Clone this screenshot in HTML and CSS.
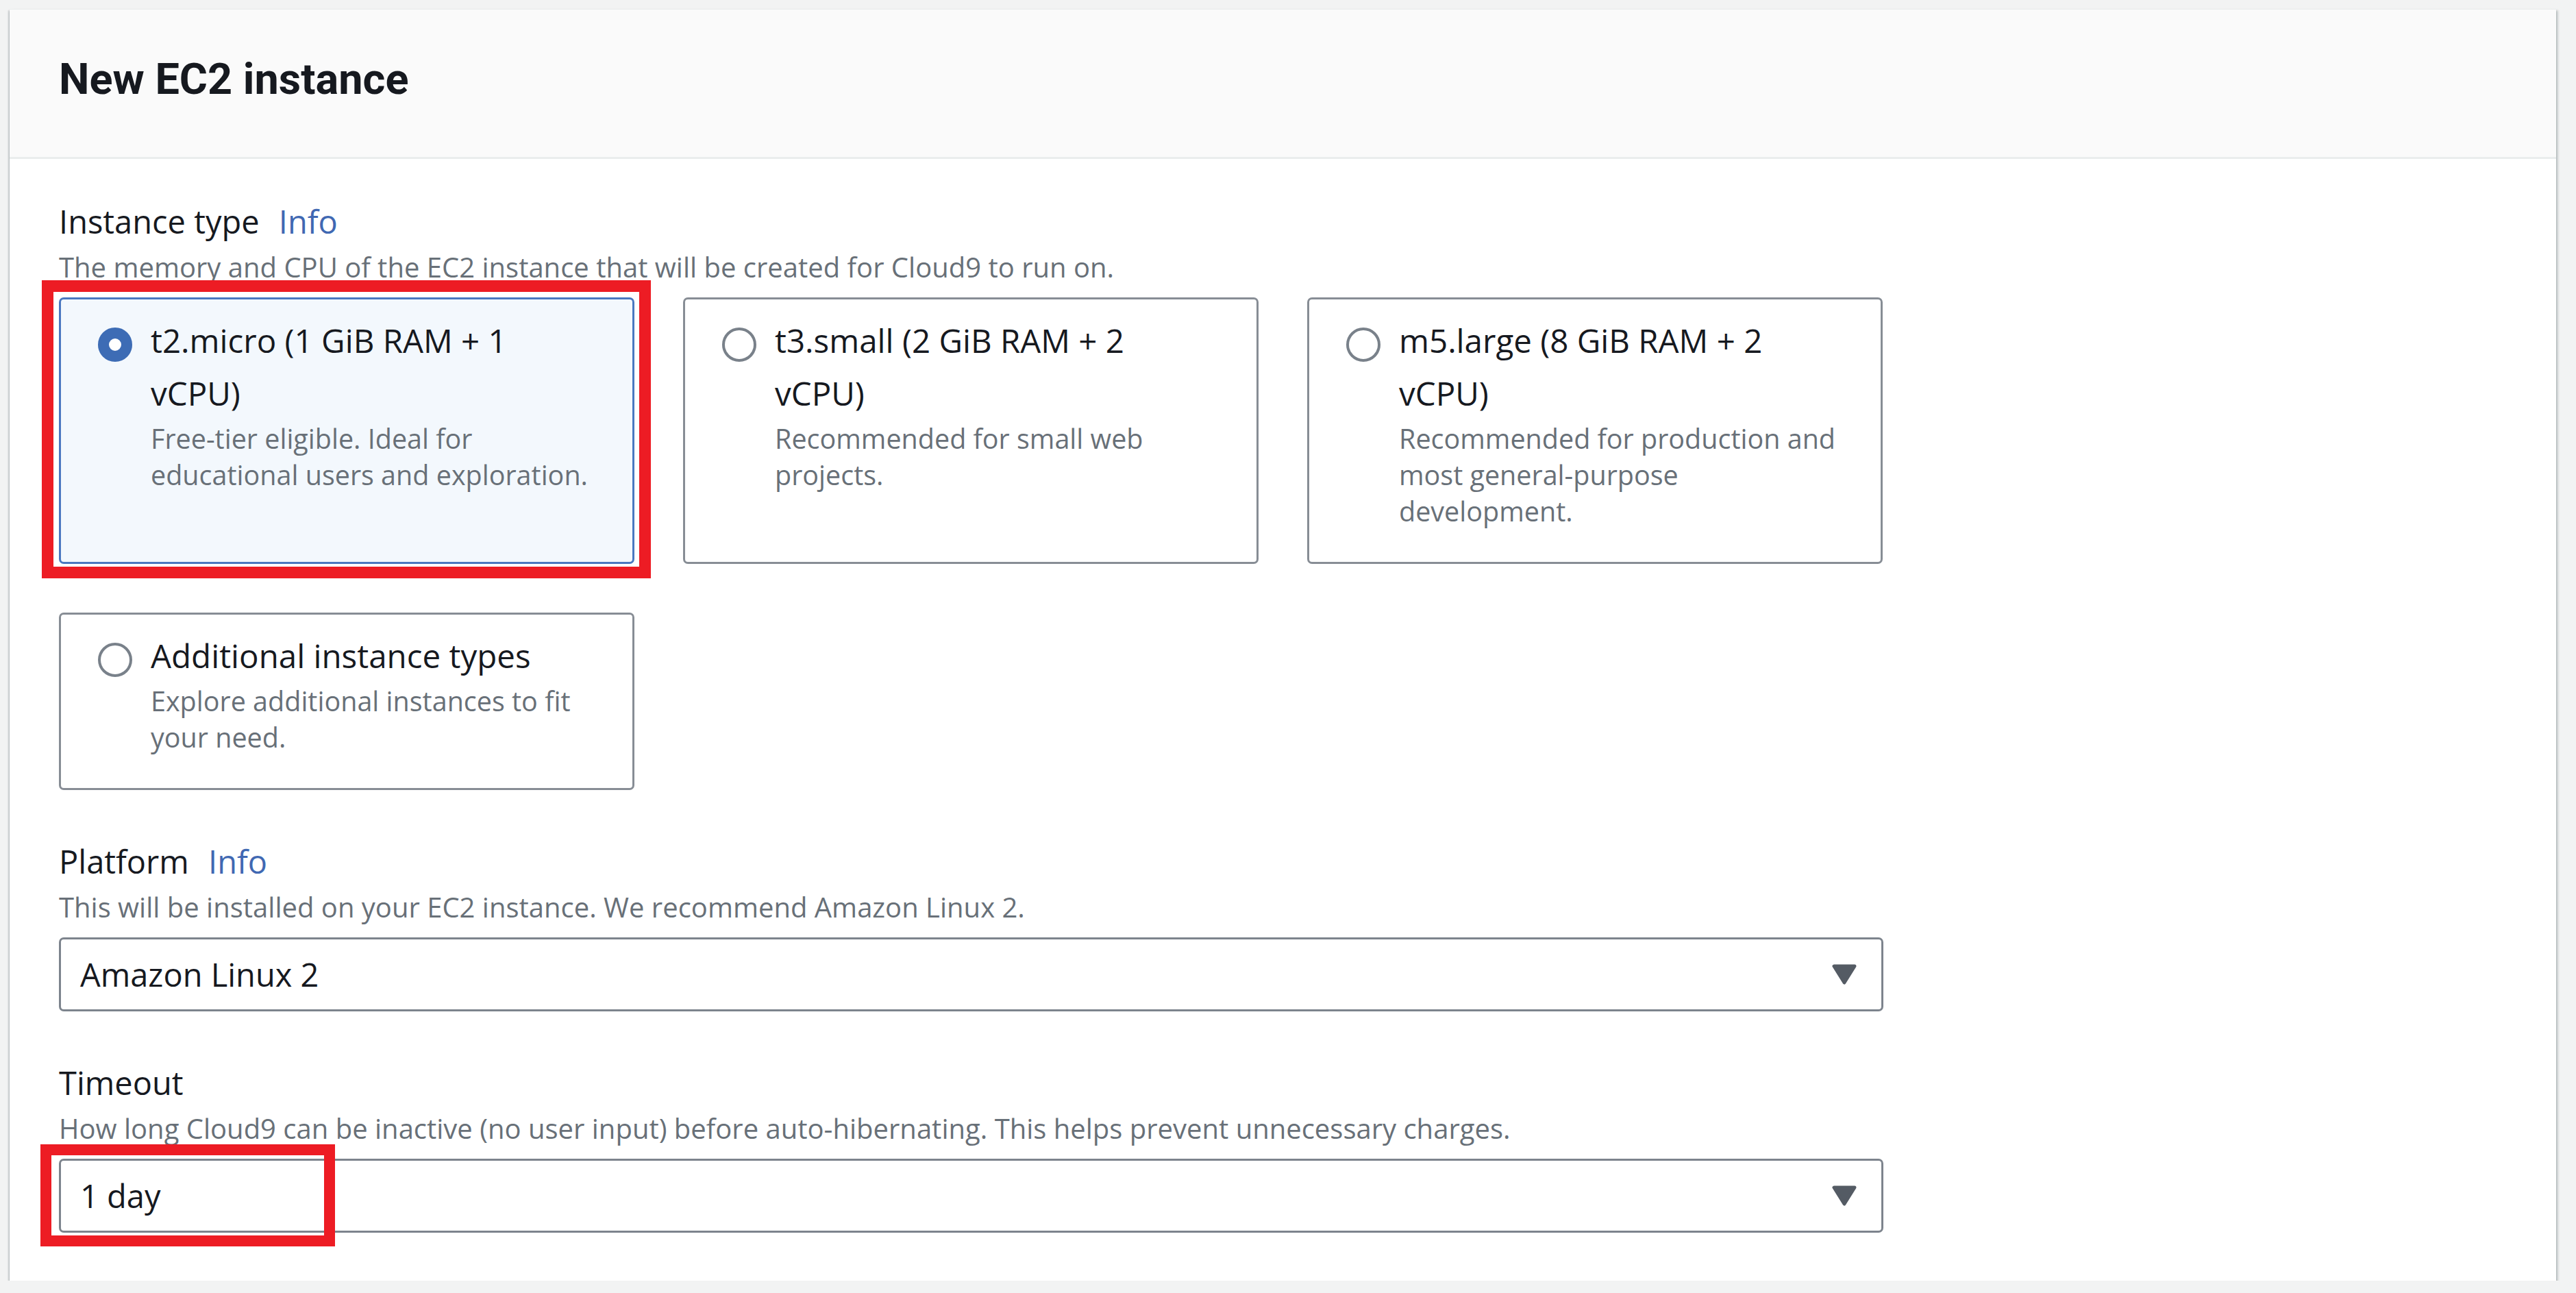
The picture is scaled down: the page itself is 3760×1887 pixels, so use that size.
FILE: index.html
```html
<!DOCTYPE html>
<html lang="en">
<head>
<meta charset="utf-8">
<title>New EC2 instance</title>
<link rel="stylesheet" href="styles.css">
</head>
<body>
<div class="container">
  <div class="container-header">
    <h2 class="title">New EC2 instance</h2>
  </div>
  <div class="container-body">
    <section class="field">
      <div class="field-label">Instance type <a class="info">Info</a></div>
      <div class="field-desc">The memory and CPU of the EC2 instance that will be created for Cloud9 to run on.</div>
      <div class="tiles">
        <div class="tile-wrap">
          <label class="tile tile-selected">
            <span class="radio radio-checked"></span>
            <span class="tile-text">
              <span class="tile-title">t2.micro (1 GiB RAM + 1 vCPU)</span>
              <span class="tile-desc">Free-tier eligible. Ideal for educational users and exploration.</span>
            </span>
          </label>
          <span class="highlight highlight-tile"></span>
        </div>
        <div class="tile-wrap">
          <label class="tile">
            <span class="radio"></span>
            <span class="tile-text">
              <span class="tile-title">t3.small (2 GiB RAM + 2 vCPU)</span>
              <span class="tile-desc">Recommended for small web projects.</span>
            </span>
          </label>
        </div>
        <div class="tile-wrap">
          <label class="tile">
            <span class="radio"></span>
            <span class="tile-text">
              <span class="tile-title">m5.large (8 GiB RAM + 2 vCPU)</span>
              <span class="tile-desc">Recommended for production and most general-purpose development.</span>
            </span>
          </label>
        </div>
        <div class="tile-wrap">
          <label class="tile">
            <span class="radio"></span>
            <span class="tile-text">
              <span class="tile-title">Additional instance types</span>
              <span class="tile-desc">Explore additional instances to fit your need.</span>
            </span>
          </label>
        </div>
      </div>
    </section>

    <section class="field">
      <div class="field-label">Platform <a class="info">Info</a></div>
      <div class="field-desc">This will be installed on your EC2 instance. We recommend Amazon Linux 2.</div>
      <div class="select-wrap">
        <div class="select">
          <span class="select-value">Amazon Linux 2</span>
          <svg class="caret" width="36" height="30" viewBox="0 0 36 30"><polygon points="3,3 33,3 18,27" fill="#545b64" stroke="#545b64" stroke-width="5" stroke-linejoin="round"/></svg>
        </div>
      </div>
    </section>

    <section class="field">
      <div class="field-label">Timeout</div>
      <div class="field-desc">How long Cloud9 can be inactive (no user input) before auto-hibernating. This helps prevent unnecessary charges.</div>
      <div class="select-wrap">
        <div class="select">
          <span class="select-value">1 day</span>
          <svg class="caret" width="36" height="30" viewBox="0 0 36 30"><polygon points="3,3 33,3 18,27" fill="#545b64" stroke="#545b64" stroke-width="5" stroke-linejoin="round"/></svg>
        </div>
        <span class="highlight highlight-select"></span>
      </div>
    </section>
  </div>
</div>
</body>
</html>
```

FILE: styles.css
```css
* { box-sizing: border-box; }

html, body {
  margin: 0;
  padding: 0;
}

body {
  background: #f2f3f3;
  font-family: "Open Sans", "Noto Sans", "Liberation Sans", Arial, sans-serif;
  color: #16191f;
  padding: 13px 29px 0 14px;
}

.container {
  background: #ffffff;
  box-shadow: 0 3px 3px 0 rgba(0, 28, 36, 0.3), 3px 2px 3px 0 rgba(0, 28, 36, 0.15), -2px 2px 2px 0 rgba(0, 28, 36, 0.12);
  border-top: 1px solid #eaeded;
}

.container-header {
  background: #fafafa;
  border-bottom: 3px solid #eaeded;
  padding: 62px 72px 73px;
}

.title {
  margin: 0;
  font-family: Roboto, "Liberation Sans", Arial, sans-serif;
  font-size: 63px;
  line-height: 80px;
  font-weight: 700;
  color: #16191f;
}

.container-body {
  padding: 58px 72px 70px;
  display: flex;
  flex-direction: column;
  gap: 71px;
}

.field {
  width: 2663px;
  display: flex;
  flex-direction: column;
}

.field-label {
  font-size: 47px;
  line-height: 66px;
  color: #16191f;
}

.info {
  color: #4068b2;
  margin-left: 16px;
}

.field-desc {
  font-size: 40px;
  line-height: 53px;
  color: #687078;
  margin-top: 7px;
}

.tiles {
  margin-top: 18px;
  display: grid;
  grid-template-columns: repeat(3, 840px);
  gap: 71px;
}

.tile-wrap {
  position: relative;
  display: flex;
}

.tile {
  flex: 1;
  display: flex;
  align-items: flex-start;
  gap: 27px;
  border: 3px solid #878d95;
  border-radius: 7px;
  padding: 21px 60px 47px 54px;
  background: #ffffff;
}

.tile-selected {
  background: #f3f8fd;
  border-color: #4a78c0;
}

.radio {
  flex: 0 0 auto;
  width: 50px;
  height: 50px;
  border-radius: 50%;
  border: 4px solid #79818a;
  background: #ffffff;
  margin-top: 20px;
}

.radio-checked {
  border: 16px solid #3d6cb5;
}

.tile-text {
  display: flex;
  flex-direction: column;
}

.tile-title {
  font-size: 47.5px;
  line-height: 77px;
  color: #16191f;
}

.tile-desc {
  font-size: 39.5px;
  line-height: 53px;
  color: #687078;
  margin-top: 2px;
}

.highlight {
  position: absolute;
  border: 17px solid #ed1c24;
  pointer-events: none;
}

.highlight-tile {
  left: -25px;
  top: -25px;
  right: -24px;
  bottom: -21px;
}

.select-wrap {
  position: relative;
  margin-top: 18px;
}

.select {
  height: 108px;
  border: 3px solid #7d848d;
  border-radius: 7px;
  padding: 0 36px 0 28px;
  display: flex;
  align-items: center;
  justify-content: space-between;
  background: #ffffff;
}

.select-value {
  font-size: 47px;
  line-height: 66px;
  color: #16191f;
}

.caret {
  display: block;
}

.highlight-select {
  left: -27px;
  top: -21px;
  width: 430px;
  height: 149px;
  border-width: 16px;
}
```
